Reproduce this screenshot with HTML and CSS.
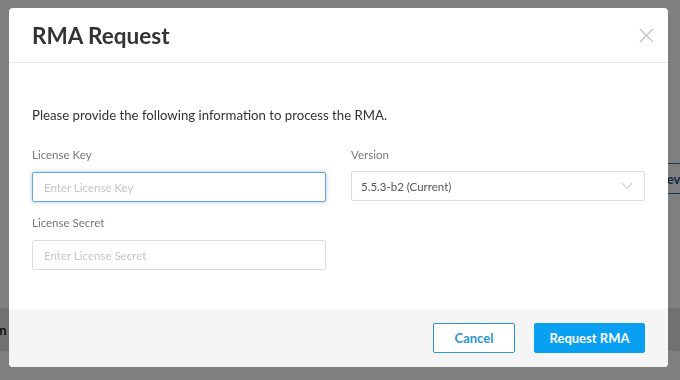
FILE: index.html
```html
<!DOCTYPE html>
<html lang="en">
<head>
    <meta charset="UTF-8">
    <title>RMA Request</title>
    <link rel="stylesheet" href="styles.css">
</head>
<body>
<div class="page">
    <div class="page-toolbar">
        <button class="page-button">Preview</button>
    </div>
    <div class="page-row">
        <span class="page-cell">Version</span>
    </div>
</div>

<div class="overlay">
    <div class="modal">
        <header class="modal-header">
            <h1>RMA Request</h1>
            <button class="close" aria-label="Close">
                <svg width="15" height="15" viewBox="0 0 15 15">
                    <path d="M1 1 L14 14 M14 1 L1 14" stroke="#c9c9c9" stroke-width="1.6" fill="none"/>
                </svg>
            </button>
        </header>

        <section class="modal-body">
            <p class="intro">Please provide the following information to process the RMA.</p>
            <div class="form-grid">
                <div class="form-col">
                    <label class="field-label">License Key</label>
                    <input class="field focused" type="text" placeholder="Enter License Key">
                    <label class="field-label second">License Secret</label>
                    <input class="field" type="text" placeholder="Enter License Secret">
                </div>
                <div class="form-col">
                    <label class="field-label">Version</label>
                    <div class="select">
                        <span>5.5.3-b2 (Current)</span>
                        <svg width="12" height="8" viewBox="0 0 12 8">
                            <path d="M1 1 L6 6.5 L11 1" stroke="#c4c4c4" stroke-width="1.1" fill="none"/>
                        </svg>
                    </div>
                </div>
            </div>
        </section>

        <footer class="modal-footer">
            <button class="btn btn-outline">Cancel</button>
            <button class="btn btn-primary">Request RMA</button>
        </footer>
    </div>
</div>
</body>
</html>
```

FILE: styles.css
```css
body {
    margin: 0;
    padding: 0;
    font-family: "Lato", "Open Sans", sans-serif;
    overflow: hidden;
}

/* page behind the dialog */
.page {
    width: 680px;
    height: 380px;
    background-color: #fff;
    padding-top: 163px;
    box-sizing: border-box;
}

.page-toolbar {
    display: flex;
    justify-content: flex-end;
    margin-right: -36px;
}

.page-button {
    height: 31px;
    padding: 0 14px;
    border: 1px solid #2a6fa8;
    background-color: #fff;
    color: #1d4f7a;
    font-family: inherit;
    font-weight: bold;
    font-size: 13px;
}

.page-row {
    margin-top: 114px;
    height: 43px;
    background-color: #e2e2e2;
    display: flex;
    align-items: center;
    margin-left: -37px;
}

.page-cell {
    font-weight: bold;
    font-size: 13px;
    color: #222;
}

.overlay {
    position: fixed;
    top: 0;
    left: 0;
    width: 100%;
    height: 100%;
    background-color: rgba(0, 0, 0, 0.5);
}

.modal {
    position: absolute;
    top: 8px;
    left: 9px;
    width: 659px;
    height: 359px;
    background-color: #fff;
    border-radius: 4px;
    display: flex;
    flex-direction: column;
    overflow: hidden;
}

.modal-header {
    height: 54px;
    border-bottom: 1px solid #e9e9e9;
    display: flex;
    align-items: center;
    justify-content: space-between;
    padding: 0 14px 0 23px;
}

.modal-header h1 {
    margin: 0;
    font-size: 22.5px;
    font-weight: bold;
    color: #333;
}

.close {
    border: none;
    background: none;
    padding: 0;
    width: 15px;
    height: 15px;
    cursor: pointer;
}

.modal-body {
    flex-grow: 1;
    padding: 43px 23px 0;
}

.intro {
    margin: 0;
    font-size: 13.2px;
    line-height: 18px;
    color: #333;
}

.form-grid {
    display: grid;
    grid-template-columns: 1fr 1fr;
    column-gap: 25px;
    margin-top: 23px;
}

.form-col {
    display: flex;
    flex-direction: column;
}

.field-label {
    font-size: 11.5px;
    line-height: 16px;
    color: #777;
    margin-bottom: 9px;
}

.field-label.second {
    margin-top: 13px;
}

.field {
    height: 30px;
    box-sizing: border-box;
    border: 1px solid #ddd;
    border-radius: 2px;
    padding: 0 11px;
    font-family: inherit;
    font-size: 11.5px;
    color: #555;
    outline: none;
}

.field::placeholder {
    color: #c6c6c6;
}

.field.focused {
    border-color: #66a6dc;
    box-shadow: 0 0 4px rgba(102, 166, 220, 0.6);
}

.select {
    height: 30px;
    box-sizing: border-box;
    border: 1px solid #ddd;
    border-radius: 2px;
    padding: 0 11px 0 9px;
    display: flex;
    align-items: center;
    justify-content: space-between;
    font-size: 11.5px;
    color: #555;
    margin-top: -1px;
}

.modal-footer {
    height: 58px;
    background-color: #f5f5f5;
    display: flex;
    align-items: center;
    justify-content: flex-end;
    gap: 19px;
    padding: 0 23px;
}

.btn {
    height: 30px;
    border-radius: 2px;
    font-family: inherit;
    font-size: 13px;
    font-weight: bold;
    cursor: pointer;
}

.btn-outline {
    width: 82px;
    background-color: #fff;
    border: 1px solid #2a93d5;
    color: #2a93d5;
}

.btn-primary {
    width: 111px;
    background-color: #0aa0f2;
    border: 1px solid #0aa0f2;
    color: #fff;
}
```
